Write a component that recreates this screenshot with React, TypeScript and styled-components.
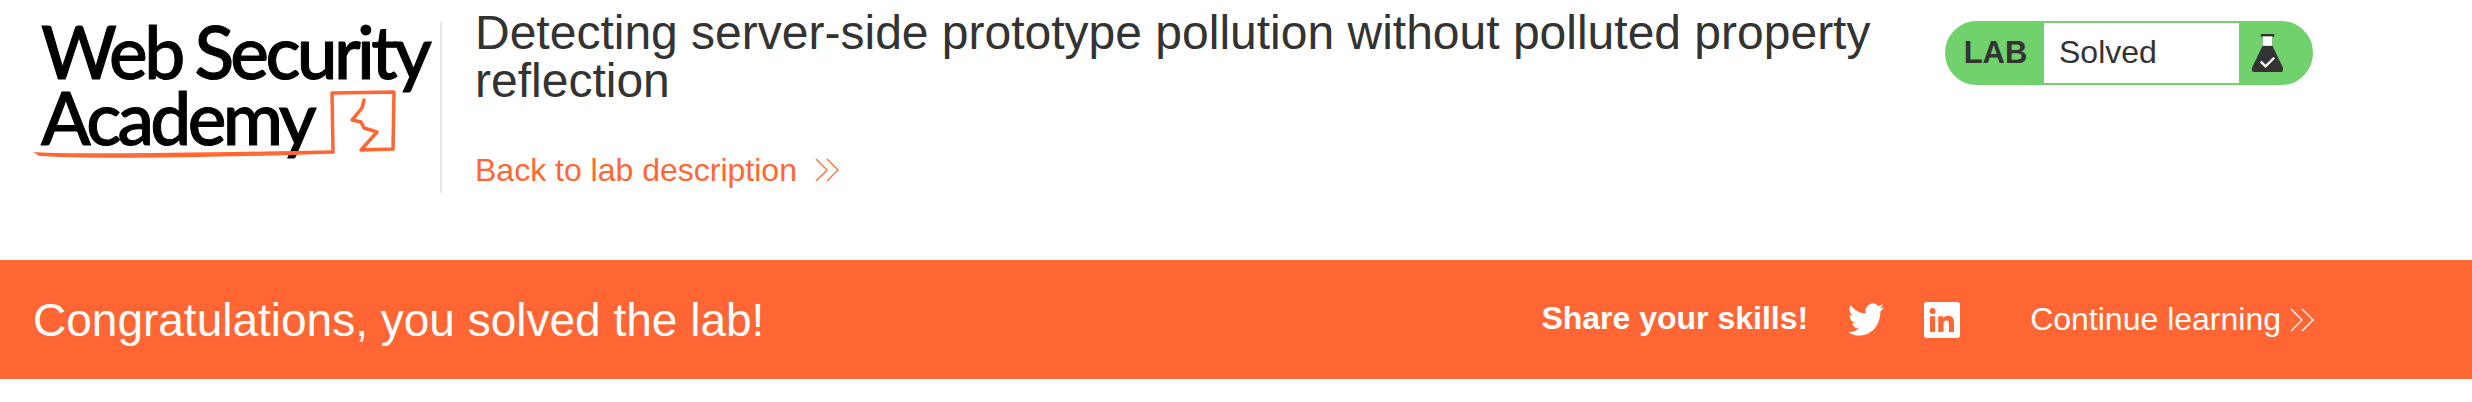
import styled, { createGlobalStyle } from "styled-components";

const GlobalStyle = createGlobalStyle`
  html, body {
    margin: 0;
    padding: 0;
    background: #fff;
    font-family: "Liberation Sans", Arial, sans-serif;
  }
`;

const Header = styled.header`
  display: grid;
  grid-template-columns: 442px 1fr 527px;
  height: 260px;
  padding-top: 21px;
  box-sizing: border-box;
`;

const LogoCell = styled.div`
  position: relative;
  height: 172px;
  padding: 0 0 0 41px;
  border-right: 2px solid #e6e6e6;
  box-sizing: border-box;
`;

const LogoWords = styled.div`
  margin-top: -3px;
  font-family: Lato, sans-serif;
  font-size: 73px;
  line-height: 66px;
  font-weight: 500;
  letter-spacing: -3.6px;
  word-spacing: -2px;
  color: #000;
  -webkit-text-stroke: 1px #000;
  white-space: nowrap;
`;

const LogoMark = styled.svg`
  position: absolute;
  left: 0;
  top: 0;
`;

const TitleCell = styled.div`
  padding-left: 33px;
  width: 1440px;
`;

const Title = styled.h2`
  margin: -12px 0 0;
  font-size: 48px;
  line-height: 48px;
  font-weight: 400;
  color: #333332;
`;

const BackLink = styled.a`
  display: flex;
  align-items: center;
  gap: 18px;
  margin-top: 47px;
  font-size: 32px;
  line-height: 36px;
  color: #ff6633;
  text-decoration: none;
`;

const Status = styled.div`
  display: flex;
  align-items: stretch;
  width: 368px;
  height: 64px;
  box-sizing: border-box;
  border: 2px solid #70d16d;
  border-radius: 32px;
  background: #70d16d;
`;

const StatusTag = styled.span`
  width: 97px;
  display: flex;
  align-items: center;
  justify-content: center;
  box-sizing: border-box;
  font-size: 31px;
  font-weight: 700;
  color: #333332;
`;

const StatusText = styled.span`
  width: 195px;
  display: flex;
  align-items: center;
  padding: 0 0 2px 15px;
  box-sizing: border-box;
  background: #fff;
  font-size: 32px;
  color: #333332;
`;

const StatusIcon = styled.span`
  flex: 1;
  display: flex;
  align-items: center;
  padding-left: 12px;
`;

const Banner = styled.section`
  display: flex;
  align-items: center;
  height: 119px;
  padding: 0 158px 0 33px;
  background: #ff6633;
  color: #fff;
`;

const BannerTitle = styled.h4`
  flex: 1;
  margin: 0;
  font-size: 46px;
  font-weight: 400;
`;

const Share = styled.span`
  font-size: 32px;
  font-weight: 700;
  margin-right: 40px;
  padding-bottom: 3px;
`;

const SocialLink = styled.a`
  display: flex;
  margin-right: 40px;
  color: #fff;
`;

const ContinueLink = styled.a`
  display: flex;
  align-items: center;
  gap: 9px;
  margin-left: 30px;
  font-size: 32px;
  color: #fff;
`;

const Logo = () => (
  <LogoMark width="440" height="172" viewBox="0 0 440 172">
    <path d="M36 132c60 3 180 0 296-2l1 2c-100 3-240 6-294 2z" fill="#ff6633" stroke="#ff6633" strokeWidth="1.5" />
    <path
      d="M333 131l-1-59 62-1-1 57-32 1 16-18-13-4-3-6-9-2 10-12 2-8"
      fill="none"
      stroke="#ff6633"
      strokeWidth="3.5"
      strokeLinejoin="round"
      strokeLinecap="round"
    />
  </LogoMark>
);

const Chevrons = ({ size = 24 }: { size?: number }) => (
  <svg width={size} height={size} viewBox="0 0 24 24" fill="none" stroke="currentColor" strokeWidth="1.3">
    <path d="M1 1l11 11L1 23M12 1l11 11-11 11" />
  </svg>
);

const Flask = () => (
  <svg width="33" height="40" viewBox="0 0 34 42">
    <path d="M10 1h14v3h-2v9l11 23c1 3 0 5-2 5H3c-2 0-3-2-2-5l11-23V4h-2z" fill="#333332" />
    <path d="M12 3.500h10v10h-10z" fill="#fff" />
    <path d="M10 30l5 5 9-9" fill="none" stroke="#fff" strokeWidth="2.500" />
  </svg>
);

const Twitter = () => (
  <svg width="36" height="33" viewBox="0 2 24 20" fill="#fff" preserveAspectRatio="none">
    <path d="M23.95 4.57a10 10 0 0 1-2.82.77 4.96 4.96 0 0 0 2.16-2.72c-.95.55-2 .96-3.13 1.19a4.92 4.92 0 0 0-8.38 4.48C7.69 8.1 4.07 6.13 1.64 3.16a4.82 4.82 0 0 0-.67 2.48c0 1.71.87 3.21 2.19 4.1a4.9 4.9 0 0 1-2.23-.61v.06c0 2.39 1.7 4.38 3.95 4.83a5 5 0 0 1-2.21.08 4.94 4.94 0 0 0 4.6 3.42A9.87 9.87 0 0 1 0 19.54a14 14 0 0 0 7.56 2.21c9.05 0 14-7.5 14-13.98 0-.21 0-.42-.02-.63a9.94 9.94 0 0 0 2.41-2.57z" />
  </svg>
);

const LinkedIn = () => (
  <svg width="36" height="36" viewBox="0 0 24 24">
    <rect width="24" height="24" rx="2" fill="#fff" />
    <path
      fill="#ff6633"
      d="M4 9.500h3.400V20H4zM5.700 4a2 2 0 1 1 0 4 2 2 0 0 1 0-4zM9.500 9.500h3.200V11c.5-.9 1.600-1.800 3.300-1.800 3.500 0 4 2.300 4 5.300V20h-3.400v-4.900c0-1.200 0-2.700-1.700-2.700s-1.900 1.300-1.900 2.600v5H9.500z"
    />
  </svg>
);

export default function App() {
  return (
    <>
      <GlobalStyle />
      <Header>
        <LogoCell>
          <LogoWords>
            Web Security
            <br />
            Academy
          </LogoWords>
          <Logo />
        </LogoCell>
        <TitleCell>
          <Title>Detecting server-side prototype pollution without polluted property reflection</Title>
          <BackLink>
            Back to lab description
            <Chevrons />
          </BackLink>
        </TitleCell>
        <div>
          <Status>
            <StatusTag>LAB</StatusTag>
            <StatusText>Solved</StatusText>
            <StatusIcon>
              <Flask />
            </StatusIcon>
          </Status>
        </div>
      </Header>
      <Banner>
        <BannerTitle>Congratulations, you solved the lab!</BannerTitle>
        <Share>Share your skills!</Share>
        <SocialLink>
          <Twitter />
        </SocialLink>
        <SocialLink>
          <LinkedIn />
        </SocialLink>
        <ContinueLink>
          Continue learning
          <Chevrons size={24} />
        </ContinueLink>
      </Banner>
    </>
  );
}
